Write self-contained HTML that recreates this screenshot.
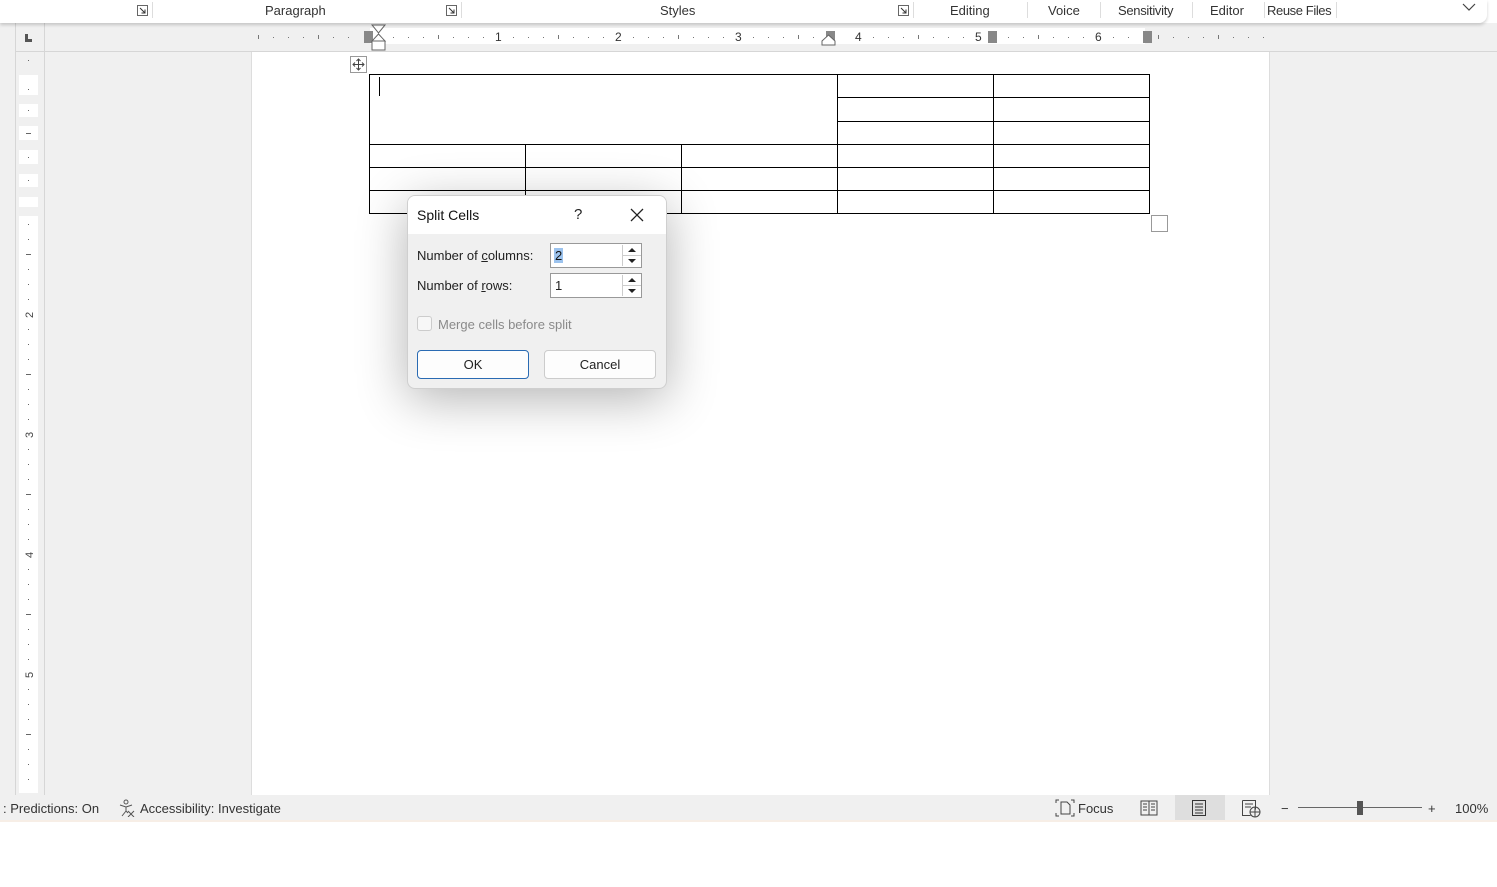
<!DOCTYPE html>
<html><head><meta charset="utf-8"><style>
*{margin:0;padding:0;box-sizing:border-box}
body{width:1497px;height:887px;background:#fff;font-family:"Liberation Sans",sans-serif;position:relative;overflow:hidden;color:#222}
.abs{position:absolute}
.rib{left:0;top:0;width:1487px;height:23px;background:#fff;border-radius:0 0 8px 0;box-shadow:0 2px 3px rgba(0,0,0,.18);z-index:5;font-size:13px;color:#333}
.rib span{position:absolute;top:3px}
.rib svg.l{position:absolute;top:5px}
.sep{position:absolute;top:2px;width:1px;height:16px;background:#ddd}
.gray{left:0;top:23px;width:1497px;height:772px;background:#f0f0f0}
.page{left:251px;top:52px;width:1019px;height:743px;background:#fff;border-left:1px solid #ddd;border-right:1px solid #ddd}
.dlg{left:407px;top:195px;width:260px;height:194px;background:#f0f0f0;border:1px solid #cfcfcf;border-radius:8px;box-shadow:0 10px 50px rgba(0,0,0,.3);z-index:10;font-size:13px;overflow:hidden}
.inp{position:absolute;left:142px;width:92px;height:25px;background:#fff;border:1px solid #999}
.spin{position:absolute;right:1px;top:1px;width:18px;height:21px;border-left:1px solid #ccc}
.btn{position:absolute;top:153px;width:112px;height:29px;background:#fdfdfd;border:1px solid #ccc;border-radius:4px;text-align:center;line-height:27px;font-size:13px}
.status{left:0;top:795px;width:1497px;height:27px;background:#f0f0f0;font-size:13px;color:#333;border-bottom:2px solid #f7eee6}
.status span{position:absolute;top:6px}
</style></head><body>
<div class="abs rib">
<svg class="l" style="left:137px" width="11" height="11"><path d="M0.5 0.5h10v10h-10z" fill="none" stroke="#666"/><path d="M3 3l5 5M8 4.5V8H4.5" fill="none" stroke="#333"/></svg><div class="sep" style="left:152px"></div>
<span style="left:265px">Paragraph</span>
<svg class="l" style="left:446px" width="11" height="11"><path d="M0.5 0.5h10v10h-10z" fill="none" stroke="#666"/><path d="M3 3l5 5M8 4.5V8H4.5" fill="none" stroke="#333"/></svg><div class="sep" style="left:461px"></div>
<span style="left:660px">Styles</span>
<svg class="l" style="left:898px" width="11" height="11"><path d="M0.5 0.5h10v10h-10z" fill="none" stroke="#666"/><path d="M3 3l5 5M8 4.5V8H4.5" fill="none" stroke="#333"/></svg><div class="sep" style="left:913px"></div>
<span style="left:950px">Editing</span><div class="sep" style="left:1027px"></div>
<span style="left:1048px">Voice</span><div class="sep" style="left:1100px"></div>
<span style="left:1118px;letter-spacing:-0.3px">Sensitivity</span><div class="sep" style="left:1192px"></div>
<span style="left:1210px">Editor</span><div class="sep" style="left:1264px"></div>
<span style="left:1267px;letter-spacing:-0.4px">Reuse Files</span><div class="sep" style="left:1336px"></div>
<svg class="abs" style="left:1462px;top:2px" width="14" height="10"><path d="M1 2l6 6 6-6" fill="none" stroke="#444" stroke-width="1.2"/></svg>
</div>
<div class="abs gray"></div>
<div class="abs" style="left:15px;top:23px;width:1482px;height:29px;border-bottom:1px solid #d6d6d6"></div>
<div class="abs" style="left:44px;top:23px;width:1px;height:772px;background:#d6d6d6"></div>
<div class="abs" style="left:15px;top:23px;width:1px;height:772px;background:#d6d6d6"></div>
<div class="abs" style="left:25px;top:34px;width:7px;height:8px;border-left:3px solid #555;border-bottom:3px solid #555"></div>
<div class="abs" style="left:370px;top:28px;width:775px;height:16px;background:#fff"></div>
<div class="abs" style="left:255px;top:30px">
<svg width="1020" height="14">
<g fill="#777">
<rect x="3" y="5" width="1" height="4"/><rect x="18" y="7" width="1" height="1"/><rect x="33" y="7" width="1" height="1"/><rect x="48" y="7" width="1" height="1"/><rect x="63" y="5" width="1" height="4"/><rect x="78" y="7" width="1" height="1"/><rect x="93" y="7" width="1" height="1"/>
</g>
<g font-size="12" fill="#333" font-family="Liberation Sans">
<text x="240" y="11">1</text><text x="360" y="11">2</text><text x="480" y="11">3</text><text x="600" y="11">4</text><text x="720" y="11">5</text><text x="840" y="11">6</text></g>
<g fill="#777">
<rect x="138" y="7" width="1" height="1"/><rect x="153" y="7" width="1" height="1"/><rect x="168" y="7" width="1" height="1"/><rect x="183" y="5" width="1" height="4"/><rect x="198" y="7" width="1" height="1"/><rect x="213" y="7" width="1" height="1"/><rect x="228" y="7" width="1" height="1"/>
<rect x="258" y="7" width="1" height="1"/><rect x="273" y="7" width="1" height="1"/><rect x="288" y="7" width="1" height="1"/><rect x="303" y="5" width="1" height="4"/><rect x="318" y="7" width="1" height="1"/><rect x="333" y="7" width="1" height="1"/><rect x="348" y="7" width="1" height="1"/>
<rect x="378" y="7" width="1" height="1"/><rect x="393" y="7" width="1" height="1"/><rect x="408" y="7" width="1" height="1"/><rect x="423" y="5" width="1" height="4"/><rect x="438" y="7" width="1" height="1"/><rect x="453" y="7" width="1" height="1"/><rect x="468" y="7" width="1" height="1"/>
<rect x="498" y="7" width="1" height="1"/><rect x="513" y="7" width="1" height="1"/><rect x="528" y="7" width="1" height="1"/><rect x="543" y="5" width="1" height="4"/><rect x="558" y="7" width="1" height="1"/>
<rect x="618" y="7" width="1" height="1"/><rect x="633" y="7" width="1" height="1"/><rect x="648" y="7" width="1" height="1"/><rect x="663" y="5" width="1" height="4"/><rect x="678" y="7" width="1" height="1"/><rect x="693" y="7" width="1" height="1"/><rect x="708" y="7" width="1" height="1"/>
<rect x="753" y="7" width="1" height="1"/><rect x="768" y="7" width="1" height="1"/><rect x="783" y="5" width="1" height="4"/><rect x="798" y="7" width="1" height="1"/><rect x="813" y="7" width="1" height="1"/><rect x="828" y="7" width="1" height="1"/>
<rect x="858" y="7" width="1" height="1"/><rect x="873" y="7" width="1" height="1"/><rect x="903" y="5" width="1" height="4"/><rect x="918" y="7" width="1" height="1"/><rect x="933" y="7" width="1" height="1"/><rect x="948" y="7" width="1" height="1"/><rect x="963" y="5" width="1" height="4"/><rect x="978" y="7" width="1" height="1"/><rect x="993" y="7" width="1" height="1"/><rect x="1008" y="7" width="1" height="1"/>
<rect x="109" y="1" width="9" height="12" fill="#888"/><rect x="733" y="1" width="9" height="12" fill="#888"/><rect x="888" y="1" width="9" height="12" fill="#888"/><rect x="571" y="1" width="9" height="12" fill="#888"/>
</g>
</svg></div>
<svg class="abs" style="left:371px;top:24px" width="16" height="28"><path d="M1 1h13L7.5 9z" fill="#fff" stroke="#666"/><path d="M7.5 10L14 17H1z" fill="#fff" stroke="#666"/><rect x="1" y="17" width="13" height="9" fill="#fff" stroke="#666"/></svg>
<svg class="abs" style="left:821px;top:34px" width="16" height="12"><path d="M7.5 1L14 7v4H1V7z" fill="#fff" stroke="#666"/></svg>
<div class="abs" style="left:19px;top:52px;width:19px;height:743px;background:#f0f0f0"></div>
<div class="abs" style="left:19px;top:75px;width:19px;height:20px;background:#fff"></div>
<div class="abs" style="left:19px;top:104px;width:19px;height:13px;background:#fff"></div>
<div class="abs" style="left:19px;top:126px;width:19px;height:14px;background:#fff"></div>
<div class="abs" style="left:19px;top:150px;width:19px;height:14px;background:#fff"></div>
<div class="abs" style="left:19px;top:174px;width:19px;height:13px;background:#fff"></div>
<div class="abs" style="left:19px;top:197px;width:19px;height:10px;background:#fff"></div>
<div class="abs" style="left:19px;top:216px;width:19px;height:577px;background:#fff"></div>
<svg class="abs" style="left:19px;top:52px" width="19" height="743">
<g fill="#666">
<rect x="9" y="8" width="1" height="1"/><rect x="9" y="37" width="1" height="1"/><rect x="9" y="58" width="1" height="1"/><rect x="7" y="81" width="5" height="1"/><rect x="9" y="105" width="1" height="1"/><rect x="9" y="128" width="1" height="1"/>
<rect x="9" y="172" width="1" height="1"/><rect x="9" y="187" width="1" height="1"/><rect x="7" y="202" width="5" height="1"/><rect x="9" y="217" width="1" height="1"/><rect x="9" y="232" width="1" height="1"/><rect x="9" y="247" width="1" height="1"/><rect x="9" y="277" width="1" height="1"/><rect x="9" y="292" width="1" height="1"/><rect x="9" y="307" width="1" height="1"/><rect x="7" y="322" width="5" height="1"/><rect x="9" y="337" width="1" height="1"/><rect x="9" y="352" width="1" height="1"/><rect x="9" y="367" width="1" height="1"/><rect x="9" y="397" width="1" height="1"/><rect x="9" y="412" width="1" height="1"/><rect x="9" y="427" width="1" height="1"/><rect x="7" y="442" width="5" height="1"/><rect x="9" y="457" width="1" height="1"/><rect x="9" y="472" width="1" height="1"/><rect x="9" y="487" width="1" height="1"/><rect x="9" y="517" width="1" height="1"/><rect x="9" y="532" width="1" height="1"/><rect x="9" y="547" width="1" height="1"/><rect x="7" y="562" width="5" height="1"/><rect x="9" y="577" width="1" height="1"/><rect x="9" y="592" width="1" height="1"/><rect x="9" y="607" width="1" height="1"/><rect x="9" y="637" width="1" height="1"/><rect x="9" y="652" width="1" height="1"/><rect x="9" y="667" width="1" height="1"/><rect x="7" y="682" width="5" height="1"/><rect x="9" y="697" width="1" height="1"/><rect x="9" y="712" width="1" height="1"/><rect x="9" y="727" width="1" height="1"/>
</g>
<g font-size="11" fill="#444" font-family="Liberation Sans">
<text transform="translate(14,266) rotate(-90)">2</text><text transform="translate(14,386) rotate(-90)">3</text><text transform="translate(14,506) rotate(-90)">4</text><text transform="translate(14,626) rotate(-90)">5</text>
</g></svg>
<div class="abs page"></div>
<svg class="abs" style="left:350px;top:56px" width="17" height="17"><rect x="0.5" y="0.5" width="16" height="16" fill="#fff" stroke="#999"/><path d="M8.5 3v11M3 8.5h11M6.5 5l2-2 2 2M6.5 12l2 2 2-2M5 6.5l-2 2 2 2M12 6.5l2 2-2 2" fill="none" stroke="#444"/></svg>
<svg class="abs" style="left:368px;top:73px" width="803" height="160">
<g stroke="#000" stroke-width="1" fill="none" shape-rendering="crispEdges">
<rect x="1.5" y="1.5" width="780" height="139"/>
<path d="M469.5 1.5V140.5M625.5 1.5V140.5M157.5 71.5V140.5M313.5 71.5V140.5M469.5 24.5H781.5M469.5 48.5H781.5M1.5 71.5H781.5M1.5 94.5H781.5M1.5 117.5H781.5"/>
<path d="M11.5 4v19"/>
</g>
<rect x="783.5" y="142.5" width="16" height="16" fill="#fff" stroke="#999"/>
</svg>
<div class="abs dlg">
<div style="position:absolute;left:0;top:0;width:260px;height:38px;background:#fff"></div>
<div style="position:absolute;left:9px;top:11px;font-size:14px;color:#111">Split Cells</div>
<div style="position:absolute;left:166px;top:10px;font-size:15px">?</div>
<svg style="position:absolute;left:222px;top:12px" width="14" height="14"><path d="M1 1l12 12M13 1L1 13" stroke="#222" stroke-width="1.3"/></svg>
<div style="position:absolute;left:9px;top:52px">Number of <u>c</u>olumns:</div>
<div style="position:absolute;left:9px;top:82px">Number of <u>r</u>ows:</div>
<div class="inp" style="top:47px"><span style="position:absolute;left:3px;top:4px;background:#9cc3ee;padding:0 1px;color:#111">2</span><div class="spin"><svg width="18" height="21"><path d="M5 7l4-4 4 4z" fill="#222"/><line x1="0" y1="10.5" x2="18" y2="10.5" stroke="#ccc"/><path d="M5 14l4 4 4-4z" fill="#222"/></svg></div></div>
<div class="inp" style="top:77px"><span style="position:absolute;left:4px;top:4px">1</span><div class="spin"><svg width="18" height="21"><path d="M5 7l4-4 4 4z" fill="#222"/><line x1="0" y1="10.5" x2="18" y2="10.5" stroke="#ccc"/><path d="M5 14l4 4 4-4z" fill="#222"/></svg></div></div>
<div style="position:absolute;left:9px;top:120px;width:15px;height:15px;border:1px solid #ccc;border-radius:3px;background:#f7f7f7"></div>
<div style="position:absolute;left:30px;top:121px;color:#8a8a8a">Merge cells before split</div>
<div class="btn" style="left:9px;top:154px;border:1px solid #2a6bb3">OK</div>
<div class="btn" style="left:136px;top:154px">Cancel</div>
</div>
<div class="abs status">
<span style="left:3px">: Predictions: On</span>
<svg style="position:absolute;left:118px;top:4px" width="18" height="18"><circle cx="8" cy="3" r="2" fill="none" stroke="#555"/><path d="M2 6l6 2 6-2M8 8v4l-4 5M8 12l2 2M10 12l6 6M16 12l-6 6" fill="none" stroke="#555"/></svg>
<span style="left:140px">Accessibility: Investigate</span>
<svg style="position:absolute;left:1055px;top:4px" width="20" height="18"><path d="M1 4V1h3M16 1h3v3M19 14v3h-3M4 17H1v-3" fill="none" stroke="#444"/><path d="M6 3h6l3 3v9H6z" fill="none" stroke="#444"/></svg>
<span style="left:1078px">Focus</span>
<svg style="position:absolute;left:1140px;top:5px" width="19" height="16"><path d="M1 1h8v14H1zM9 1h8v14H9z" fill="none" stroke="#444"/><path d="M3 4h4M3 7h4M3 10h4M11 4h4M11 7h4M11 10h4" stroke="#444"/></svg>
<div style="position:absolute;left:1175px;top:0;width:50px;height:25px;background:#dedede"></div>
<svg style="position:absolute;left:1191px;top:4px" width="16" height="18"><rect x="1.5" y="1.5" width="13" height="15" fill="none" stroke="#333"/><path d="M4 5h8M4 8h8M4 11h8M4 14h8" stroke="#333"/></svg>
<svg style="position:absolute;left:1241px;top:4px" width="20" height="19"><path d="M1.5 1.5h13v9M1.5 1.5v15h8" fill="none" stroke="#444"/><path d="M4 5h8M4 8h6" stroke="#444"/><circle cx="14" cy="13" r="5" fill="none" stroke="#444"/><path d="M9 13h10M14 8v10" stroke="#444"/></svg>
<span style="left:1281px">−</span>
<div style="position:absolute;left:1298px;top:12px;width:124px;height:1px;background:#666"></div>
<div style="position:absolute;left:1357px;top:6px;width:6px;height:14px;background:#555"></div>
<span style="left:1428px">+</span>
<span style="left:1455px">100%</span>
</div>
</body></html>
